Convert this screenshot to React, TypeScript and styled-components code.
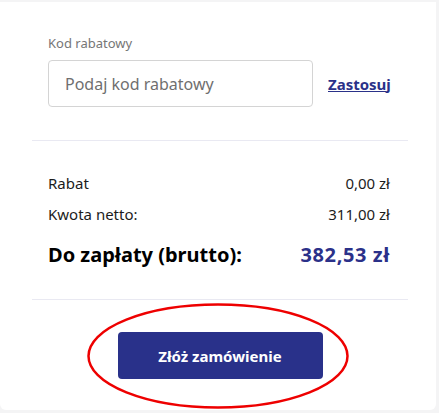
import React from "react";
import styled, { createGlobalStyle } from "styled-components";

const Global = createGlobalStyle`
  html, body { margin: 0; padding: 0; background: #f4f4f5; }
  body { font-family: "Noto Sans", "Open Sans", Arial, sans-serif; }
  * { box-sizing: border-box; }
`;

const Card = styled.div`
  margin-top: 2px;
  width: 436px;
  height: 408px;
  background: #ffffff;
  border-radius: 0 0 6px 6px;
  display: flex;
  flex-direction: column;
  padding: 0 28px 0 32px;
`;

const Section = styled.div<{ $pt: number; $pb: number }>`
  padding: ${(p) => p.$pt}px 18px ${(p) => p.$pb}px 16px;
  display: flex;
  flex-direction: column;
`;

const Divider = styled.div`
  height: 1px;
  background: #e9e9f2;
`;

const Label = styled.label`
  font-size: 13px;
  line-height: 16px;
  color: #767676;
  margin-bottom: 9px;
`;

const CodeRow = styled.div`
  display: flex;
  align-items: center;
  gap: 15px;
`;

const Input = styled.input`
  flex-shrink: 0;
  width: 265px;
  height: 47px;
  border: 1px solid #d4d4d4;
  border-radius: 4px;
  padding: 0 16px;
  font-family: inherit;
  font-size: 16px;
  color: #333;
  outline: none;
  &::placeholder { color: #6f6f6f; }
`;

const Link = styled.a`
  font-size: 15px;
  font-weight: 700;
  color: #2a3189;
  text-decoration: underline;
  cursor: pointer;
`;

const Row = styled.div<{ $big?: boolean }>`
  display: flex;
  justify-content: space-between;
  align-items: center;
  font-size: ${(p) => (p.$big ? 20 : 15)}px;
  font-weight: ${(p) => (p.$big ? 700 : 400)};
  line-height: ${(p) => (p.$big ? 26 : 20)}px;
  color: ${(p) => (p.$big ? "#000" : "#1c1c1c")};
  margin-top: ${(p) => (p.$big ? 18 : 11)}px;
  &:first-child { margin-top: 0; }
`;

const Total = styled.span`
  color: #2b3189;
  letter-spacing: 0.6px;
`;

const ButtonArea = styled.div`
  position: relative;
  display: flex;
  justify-content: center;
  padding-top: 32px;
`;

const Button = styled.button`
  width: 205px;
  height: 47px;
  background: #29318a;
  color: #ffffff;
  border: none;
  border-radius: 4px;
  font-family: inherit;
  font-size: 15px;
  font-weight: 700;
  cursor: pointer;
`;

const Ellipse = styled.svg`
  position: absolute;
  left: 55px;
  top: 3px;
  overflow: visible;
  pointer-events: none;
`;

export default function App() {
  return (
    <>
      <Global />
      <Card>
        <Section $pt={33} $pb={33}>
          <Label>Kod rabatowy</Label>
          <CodeRow>
            <Input placeholder="Podaj kod rabatowy" />
            <Link>Zastosuj</Link>
          </CodeRow>
        </Section>
        <Divider />
        <Section $pt={32} $pb={31}>
          <Row>
            <span>Rabat</span>
            <span>0,00 zł</span>
          </Row>
          <Row>
            <span>Kwota netto:</span>
            <span>311,00 zł</span>
          </Row>
          <Row $big>
            <span>Do zapłaty (brutto):</span>
            <Total>382,53 zł</Total>
          </Row>
        </Section>
        <Divider />
        <ButtonArea>
          <Button>Złóż zamówienie</Button>
          <Ellipse width="262" height="106" viewBox="0 0 262 106">
            <ellipse cx="131" cy="53" rx="129.5" ry="51.5" fill="none" stroke="#ee0000" strokeWidth="2.5" />
          </Ellipse>
        </ButtonArea>
      </Card>
    </>
  );
}
